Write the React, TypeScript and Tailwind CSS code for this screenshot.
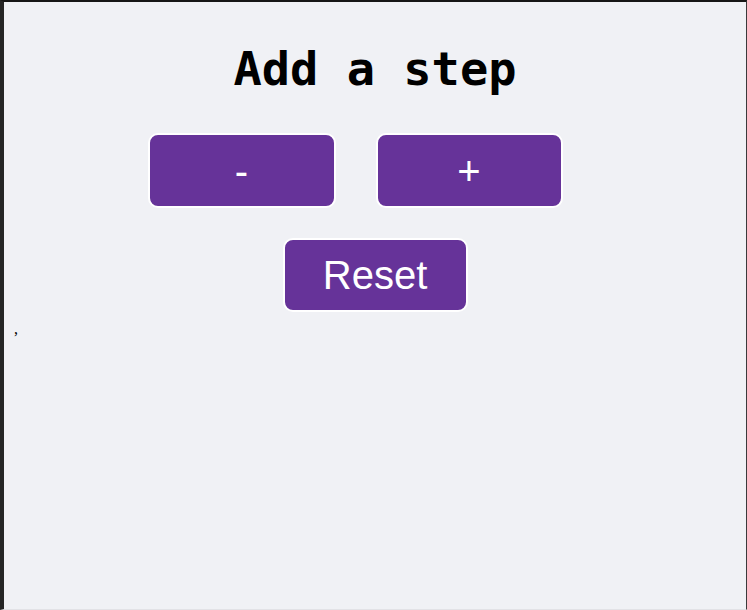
import React from "react";

export default function App() {
  const btn =
    "box-border flex items-center justify-center bg-[#663399] text-white border-2 border-white rounded-[10px] font-['Liberation_Sans',Arial,sans-serif] text-[40px] leading-none";
  return (
    <div className="box-border w-[747px] h-[610px] bg-[#f0f1f5] border-l-4 border-l-[#252525] border-t-2 border-t-[#161616] border-r border-r-[#3a3a3a] border-b border-b-[#e2e2e6] flex flex-col">
      <h1 className="mt-[43px] text-center font-['DejaVu_Sans_Mono',monospace] font-bold text-[47px] leading-[47px] text-black">
        Add a step
      </h1>
      <div className="mt-[41px] flex justify-center">
        <button className={`${btn} w-[188px] h-[75px] mr-[40px]`}>-</button>
        <button className={`${btn} w-[187px] h-[75px] mr-[40px]`}>+</button>
      </div>
      <div className="mt-[30px] flex justify-center">
        <button className={`${btn} w-[185px] h-[74px]`}>Reset</button>
      </div>
      <div className="mt-[5px] pl-[10px] font-['Liberation_Serif',serif] text-[16px] text-black">,</div>
    </div>
  );
}
